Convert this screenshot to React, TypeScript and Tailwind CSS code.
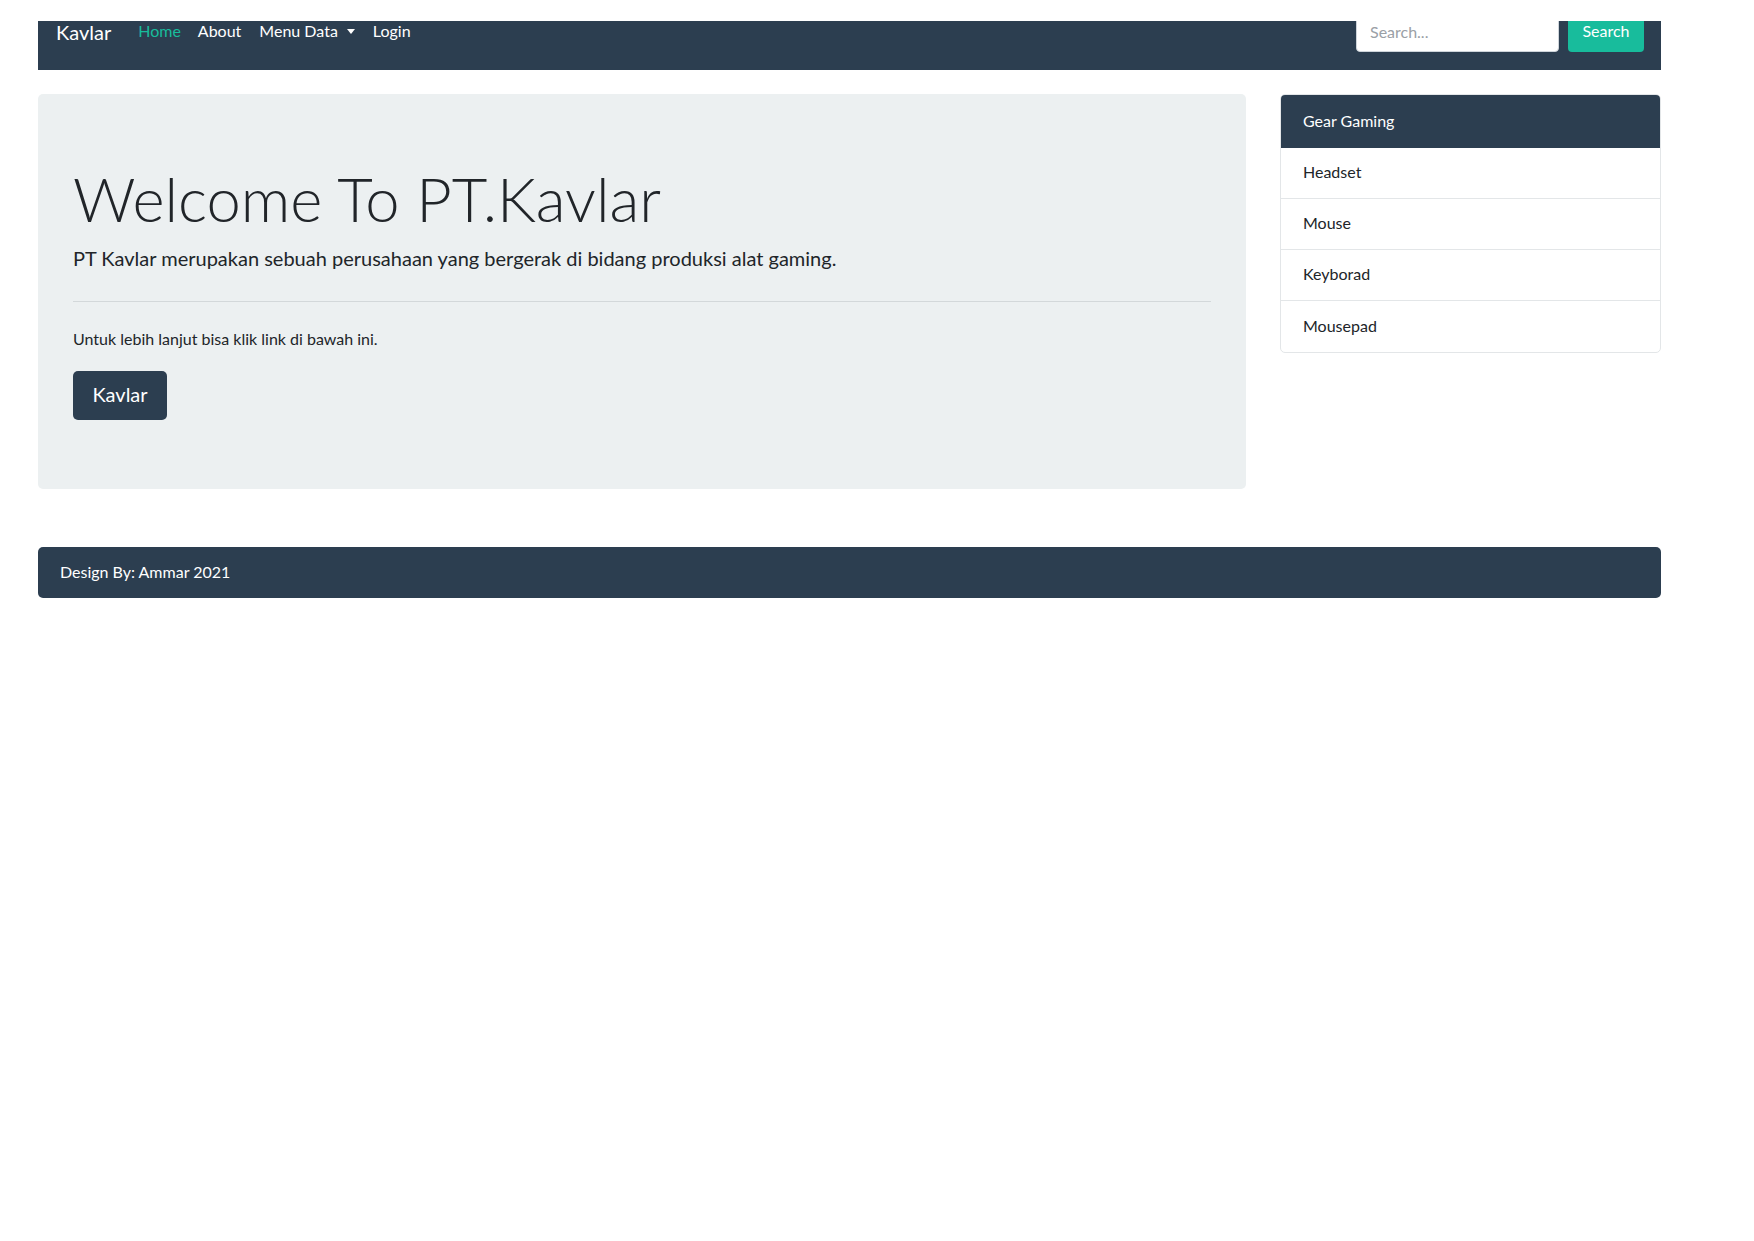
import React from "react";

export default function App() {
  return (
    <div className="min-h-[1241px] bg-white [font-family:Lato,'Noto_Sans',sans-serif] text-[#212529]">
      <div className="h-[21px]" />
      <div className="pl-[38px]">
        <div className="w-[1623px]">
          {/* Navbar */}
          <nav className="h-[49px] bg-[#2c3e50] overflow-hidden px-[18px] pr-[17px]">
            <div className="-mt-[7px] h-[38px] flex items-center">
              <span className="text-[20px] text-white mr-[27px] leading-[1.2] -translate-y-[1px]">Kavlar</span>
              <span className="text-[16px] text-[#18bc9c] mr-[17px] leading-none -translate-y-[2px]">Home</span>
              <span className="text-[16px] text-white mr-[18px] leading-none -translate-y-[2px]">About</span>
              <span className="text-[16px] text-white leading-none flex items-center -translate-y-[2px]">
                Menu Data
                <span className="ml-[9px] mt-[1px] w-0 h-0 border-t-[5px] border-t-white border-x-[4px] border-x-transparent" />
              </span>
              <span className="text-[16px] text-white ml-[18px] leading-none -translate-y-[2px]">Login</span>
              <div className="ml-auto flex items-center">
                <div className="w-[203px] h-[38px] bg-white rounded-[4px] border border-[#ced4da] flex items-center pl-[13px] pb-[2px] text-[16px] text-[#9aa0a6]">
                  Search...
                </div>
                <div className="ml-[9px] w-[76px] h-[38px] bg-[#18bc9c] rounded-[4px] flex items-center justify-center pb-[4px] text-[16px] text-white">
                  Search
                </div>
              </div>
            </div>
          </nav>

          {/* Main */}
          <div className="mt-[24px] flex gap-[34px] items-start">
            <div className="w-[1208px] bg-[#ecf0f1] rounded-[5px] px-[35px] pt-[68px] pb-[69px]">
              <h1 className="text-[61.5px] font-light leading-[1.2] text-[#212529]">Welcome To PT.Kavlar</h1>
              <p className="mt-[7px] text-[20px] leading-[1.5]">
                PT Kavlar merupakan sebuah perusahaan yang bergerak di bidang produksi alat gaming.
              </p>
              <hr className="mt-[28px] border-0 border-t border-t-[#d3d8da]" />
              <p className="mt-[25px] text-[16px] leading-[1.5]">Untuk lebih lanjut bisa klik link di bawah ini.</p>
              <div className="mt-[20px] inline-flex items-center justify-center pb-[2px] h-[49px] w-[94px] bg-[#2c3e50] rounded-[5px] text-white text-[20px]">
                Kavlar
              </div>
            </div>

            <div className="w-[381px] rounded-[5px] border border-[#e3e6e8] overflow-hidden">
              <div className="h-[53px] bg-[#2c3e50] text-white text-[16px] flex items-center pl-[22px] pb-[2px]">Gear Gaming</div>
              {["Headset", "Mouse", "Keyborad", "Mousepad"].map((t, i) => (
                <div
                  key={t}
                  className={`h-[51px] flex items-center pl-[22px] pb-[2px] text-[16px] text-[#212529] ${i < 3 ? "border-b border-b-[#e3e6e8]" : ""}`}
                >
                  {t}
                </div>
              ))}
            </div>
          </div>

          {/* Footer */}
          <footer className="mt-[58px] h-[51px] bg-[#2c3e50] rounded-[5px] flex items-center pl-[22px] text-white text-[16px]">
            Design By: Ammar 2021
          </footer>
        </div>
      </div>
    </div>
  );
}
